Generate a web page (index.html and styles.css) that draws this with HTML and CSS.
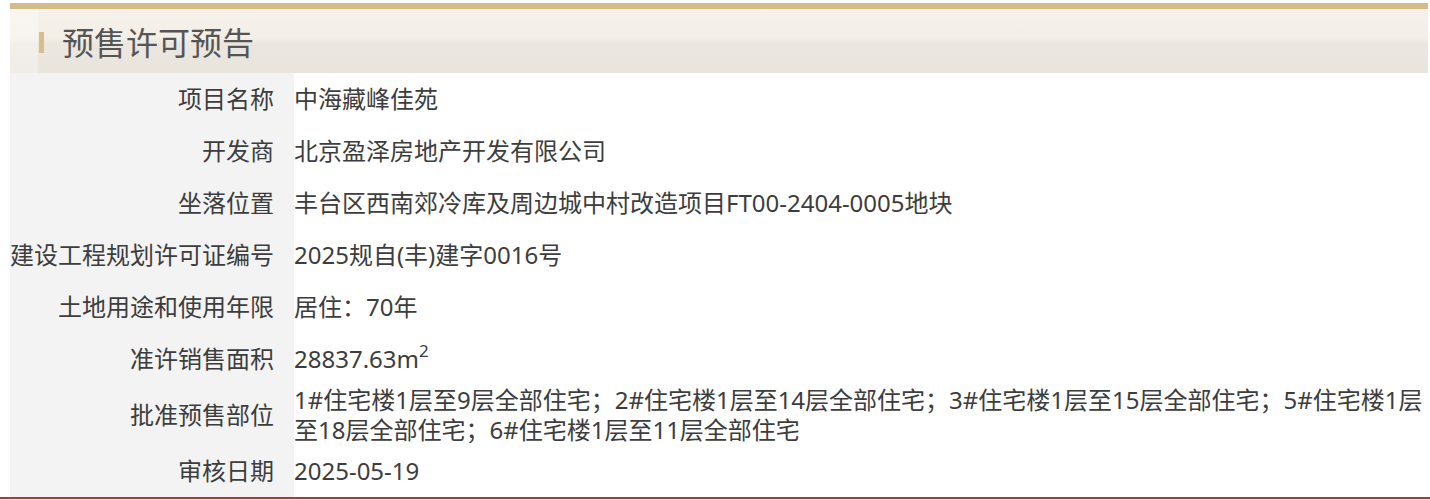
FILE: index.html
```html
<!DOCTYPE html>
<html lang="zh-CN">
<head>
    <meta charset="UTF-8">
    <title>预售许可预告</title>
    <link rel="stylesheet" href="styles.css">
</head>
<body>
    <div class="panel">
        <div class="panel-head">
            <span class="mark"></span>
            <h2>预售许可预告</h2>
        </div>
        <table class="info">
            <tbody>
                <tr>
                    <th>项目名称</th>
                    <td>中海藏峰佳苑</td>
                </tr>
                <tr>
                    <th>开发商</th>
                    <td>北京盈泽房地产开发有限公司</td>
                </tr>
                <tr>
                    <th>坐落位置</th>
                    <td>丰台区西南郊冷库及周边城中村改造项目FT00-2404-0005地块</td>
                </tr>
                <tr>
                    <th>建设工程规划许可证编号</th>
                    <td>2025规自(丰)建字0016号</td>
                </tr>
                <tr>
                    <th>土地用途和使用年限</th>
                    <td>居住：70年</td>
                </tr>
                <tr>
                    <th>准许销售面积</th>
                    <td>28837.63m<sup>2</sup></td>
                </tr>
                <tr>
                    <th>批准预售部位</th>
                    <td>1#住宅楼1层至9层全部住宅；2#住宅楼1层至14层全部住宅；3#住宅楼1层至15层全部住宅；5#住宅楼1层至18层全部住宅；6#住宅楼1层至11层全部住宅</td>
                </tr>
                <tr>
                    <th>审核日期</th>
                    <td>2025-05-19</td>
                </tr>
            </tbody>
        </table>
    </div>
    <div class="footer-line"></div>
</body>
</html>
```

FILE: styles.css
```css
body {
    margin: 0;
    padding: 3px 0 0 0;
    background: #fff;
    font-family: "Noto Sans", "Noto Sans CJK SC", sans-serif;
    color: #3d3d3d;
}

.panel {
    margin: 0 2px 0 10px;
}

.panel-head {
    display: flex;
    align-items: center;
    height: 64px;
    border-top: 6px solid #d4bc8b;
    background:
        linear-gradient(to right, rgba(255, 255, 255, 0.35) 28px, transparent 28px),
        linear-gradient(#f6f2eb 0%, #f3efe7 45%, #ebe6df 55%, #e9e4dc 100%);
}

.mark {
    width: 5px;
    height: 21px;
    margin-left: 29px;
    margin-top: 2px;
    background: #d8be88;
}

.panel-head h2 {
    margin: 0 0 0 18px;
    font-size: 32px;
    font-weight: normal;
    color: #555;
}

.info {
    width: 100%;
    border-collapse: collapse;
    font-size: 24px;
}

.info th,
.info td {
    height: 52px;
    padding: 0;
    line-height: 30px;
    vertical-align: middle;
}

.info th {
    width: 262px;
    padding-right: 20px;
    background: #f3f3f3;
    font-weight: normal;
    text-align: right;
    color: #3d3d3d;
    white-space: nowrap;
}

.info td {
    padding-left: 0;
    color: #3d3d3d;
}

.info sup {
    font-size: 17px;
    line-height: 0;
    vertical-align: 11px;
}

.footer-line {
    border-top: 2px solid #a83a3a;
}
```
